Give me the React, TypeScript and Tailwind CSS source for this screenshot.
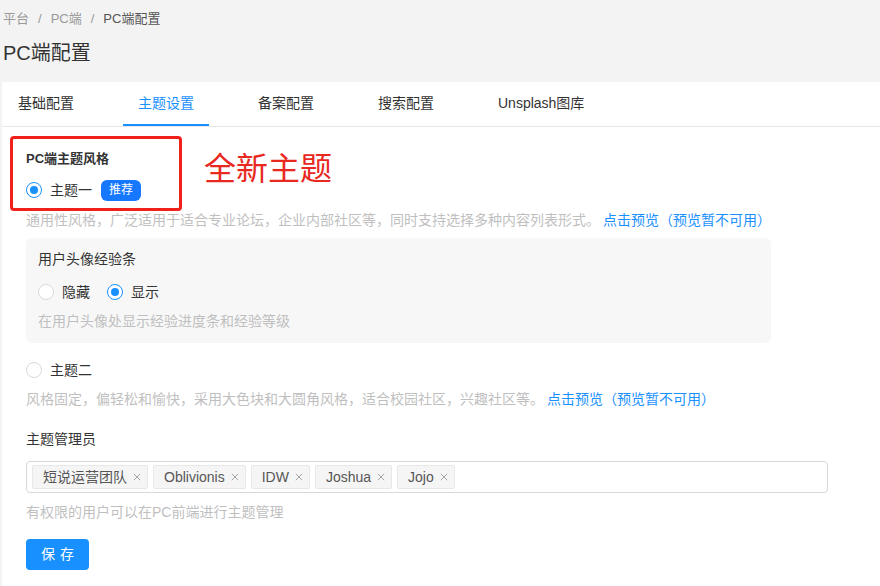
import { ReactNode } from "react";

const tabs = ["基础配置", "主题设置", "备案配置", "搜索配置", "Unsplash图库"];
const admins = ["短说运营团队", "Oblivionis", "IDW", "Joshua", "Jojo"];

function Radio({ checked, children }: { checked?: boolean; children: ReactNode }) {
  return (
    <label className="flex items-center gap-[8px] cursor-pointer">
      <span
        className={
          checked
            ? "w-4 h-4 rounded-full border border-[#1890ff] flex items-center justify-center bg-white"
            : "w-4 h-4 rounded-full border border-[#d9d9d9] bg-white"
        }
      >
        {checked && <span className="w-2 h-2 rounded-full bg-[#1890ff]" />}
      </span>
      <span className="text-[14px] leading-5 text-[#333]">{children}</span>
    </label>
  );
}

function Hint({ children, link }: { children: ReactNode; link?: boolean }) {
  return (
    <p className="text-[14px] leading-5 text-[#bfbfbf]">
      {children}
      {link && (
        <a className="ml-[3px] text-[#1890ff] cursor-pointer">点击预览（预览暂不可用）</a>
      )}
    </p>
  );
}

function Tag({ name }: { name: string }) {
  return (
    <span className="h-6 flex items-center gap-[6px] pl-[10px] pr-[6px] bg-[#f5f5f5] border border-[#e8e8e8] rounded-[2px] text-[14px] text-[#555]">
      {name}
      <svg viewBox="0 0 10 10" className="w-2 h-2 text-[#999]">
        <path d="M1 1l8 8M9 1l-8 8" stroke="currentColor" strokeWidth="1.1" />
      </svg>
    </span>
  );
}

export default function App() {
  return (
    <div
      className="w-[880px] h-[586px] overflow-hidden bg-[#f3f3f3] flex flex-col"
      style={{ fontFamily: "'Liberation Sans', 'Noto Sans CJK SC', sans-serif" }}
    >
      <header className="h-[82px] shrink-0 pl-[3px] pt-[10px]">
        <div className="flex items-center gap-[9px] text-[13px] leading-[18px] text-[#999]">
          <span>平台</span>
          <span>/</span>
          <span>PC端</span>
          <span>/</span>
          <span className="text-[#555]">PC端配置</span>
        </div>
        <h1 className="mt-[13px] text-[20px] leading-6 text-[#333]">PC端配置</h1>
      </header>

      <main className="relative flex-1 ml-[2px] bg-white">
        <nav className="h-[45px] flex gap-[34px] pl-px border-b border-[#e8e8e8]">
          {tabs.map((t, i) => (
            <div
              key={t}
              className={
                i === 1
                  ? "px-[15px] flex items-center text-[14px] text-[#1890ff] border-b-2 border-[#1890ff]"
                  : "px-[15px] flex items-center text-[14px] text-[#333] border-b-2 border-transparent"
              }
            >
              {t}
            </div>
          ))}
        </nav>

        <section className="pl-6 pt-[22px] flex flex-col">
          <h3 className="text-[13px] leading-5 font-bold text-[#333]">PC端主题风格</h3>
          <div className="mt-[10px] h-[22px] flex items-center gap-[9px]">
            <Radio checked>主题一</Radio>
            <span className="h-[21px] px-2 flex items-center rounded-md bg-[#1677ff] text-white text-[12px]">
              推荐
            </span>
          </div>
          <div className="mt-[9px]">
            <Hint link>通用性风格，广泛适用于适合专业论坛，企业内部社区等，同时支持选择多种内容列表形式。</Hint>
          </div>

          <div className="mt-2 w-[745px] h-[105px] rounded-md bg-[#f7f7f7] pl-3 pt-[11px]">
            <p className="text-[14px] leading-5 text-[#333]">用户头像经验条</p>
            <div className="mt-[13px] flex items-center gap-[17px]">
              <Radio>隐藏</Radio>
              <Radio checked>显示</Radio>
            </div>
            <div className="mt-[9px]">
              <Hint>在用户头像处显示经验进度条和经验等级</Hint>
            </div>
          </div>

          <div className="mt-[17px]">
            <Radio>主题二</Radio>
          </div>
          <div className="mt-[9px]">
            <Hint link>风格固定，偏轻松和愉快，采用大色块和大圆角风格，适合校园社区，兴趣社区等。</Hint>
          </div>

          <p className="mt-5 text-[14px] leading-5 text-[#333]">主题管理员</p>
          <div className="mt-3 w-[802px] h-8 flex items-center gap-[5px] pl-[5px] border border-[#d9d9d9] rounded">
            {admins.map((a) => (
              <Tag key={a} name={a} />
            ))}
          </div>
          <div className="mt-[9px]">
            <Hint>有权限的用户可以在PC前端进行主题管理</Hint>
          </div>

          <button className="mt-[17px] w-[63px] h-[31px] rounded bg-[#1890ff] text-white text-[14px] tracking-[5px] pl-[5px]">
            保存
          </button>
        </section>

        {/* annotation overlay */}
        <div className="absolute left-2 top-[54px] w-[172px] h-[75px] border-[3px] border-[#f0201a] rounded-[4px]" />
        <span className="absolute left-[202px] top-[67px] text-[32px] leading-10 text-[#e8291f]">全新主题</span>
      </main>
    </div>
  );
}
